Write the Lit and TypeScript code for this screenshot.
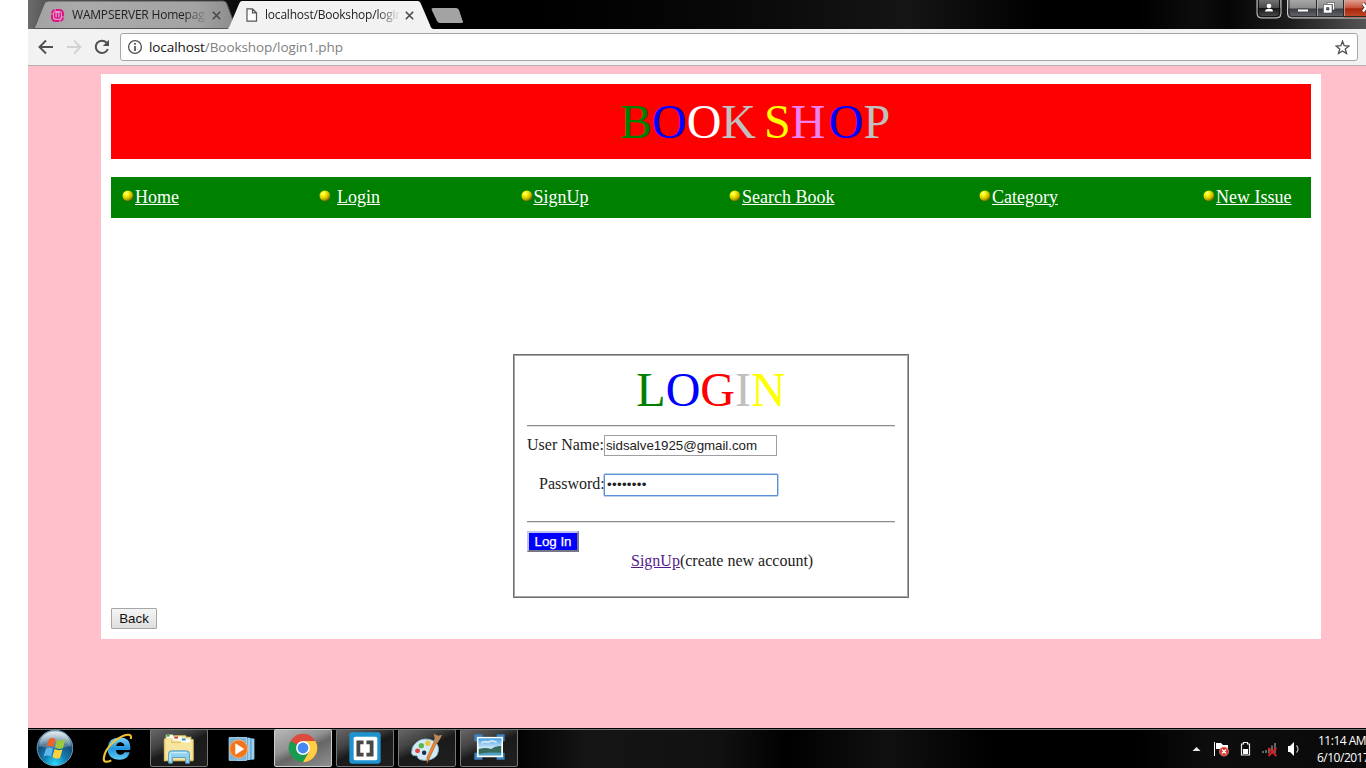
import { LitElement, html, css, svg } from "lit";
import { customElement } from "lit/decorators.js";

const closeIcon = html`<svg class="close" width="9" height="9" viewBox="0 0 9 9"><path d="M.8 .8l7.400 7.400M8.200 .8l-7.400 7.400" stroke="#4a4a4a" stroke-width="1.600" /></svg>`;

@customElement("browser-tabs")
class BrowserTabs extends LitElement {
  static styles = css`
    :host { display: block; height: 29px; font-family: "Open Sans", "Noto Sans", sans-serif; font-size: 12px; color: #222; overflow: hidden;
      background: linear-gradient(90deg, #6c6c6c 0, #555 20px, #000 240px, #000 520px, #080808 700px, #151515 880px, #000 1010px, #000 1110px, #0d0d0d 1170px, #050505 1200px, #1c1c1c 1260px, #555 1338px); }
    .strip { display: flex; height: 29px; padding-left: 7px; }
    .tab { position: relative; width: 205px; height: 29px; box-sizing: border-box; display: flex; align-items: center; padding: 1px 13px 0 15px; }
    .tab.front { margin-left: -12px; padding-left: 18px; padding-right: 17px; }
    .shape { position: absolute; left: 0; top: 0; }
    .tab:not(.front) .shape { left: -2px; }
    .fav, .label, .close { position: relative; flex: none; }
    .fav { margin-right: 7px; }
    .label { width: 134px; overflow: hidden; white-space: nowrap; letter-spacing: -0.2px; line-height: 18px;
      -webkit-mask-image: linear-gradient(90deg, #000 112px, transparent 136px); mask-image: linear-gradient(90deg, #000 112px, transparent 136px); }
    .close { margin-left: 6px; }
    .front .label { width: 134px; }
    .plus { margin: 8px 0 0 -2px; }
    .controls { display: flex; margin-left: auto; }
  `;
  render() {
    return html`<div class="strip">
      <div class="tab">
        <svg class="shape" width="207" height="29"><defs><linearGradient id="g"><stop offset="0" stop-color="#a2a2a2"/><stop offset=".2" stop-color="#ababab"/><stop offset=".8" stop-color="#a3a3a3"/><stop offset="1" stop-color="#8b8b8b"/></linearGradient></defs><path d="M.5 28.500Q2 27 3 24L11 4Q12 1 15 1H190Q193 1 194 4L203 28.500Z" fill="url(#g)" stroke="#555"/></svg>
        <svg class="fav" width="15" height="15" viewBox="0 0 15 15"><rect x="2" y="2" width="11" height="11" rx="3.500" fill="#e39cc5" stroke="#dc1686" stroke-width="2"/><path d="M4.700 4.500v4q0 1.600 1.400 1.600T7.500 8.500V5v3.500q0 1.600 1.400 1.600t1.400-1.600v-4" fill="none" stroke="#d91383" stroke-width="1.400"/><path d="M5 .8v2M10 12.300v2M1 6h2M12 9h2" stroke="#d8a7c2"/></svg>
        <span class="label">WAMPSERVER Homepag</span>${closeIcon}
      </div>
      <div class="tab front">
        <svg class="shape" width="206" height="29"><path d="M0 29Q2 26 3 23L11 4Q12 1 14 1H190Q192 1 193 4L202 25Q203 29 206 29Z" fill="#f2f2f2"/></svg>
        <svg class="fav" width="12" height="14" viewBox="0 0 12 14"><path d="M1 .8h5.500l4 4v8.400H1zM6.500 .8v4h4" fill="#fff" stroke="#555" stroke-width="1.200"/></svg>
        <span class="label">localhost/Bookshop/login</span>${closeIcon}
      </div>
      <svg class="plus" width="34" height="16"><path d="M2 0H25Q27 0 28 2L32 14Q32 15 31 15H9Q7 15 6 13L.7 2Q0 0 2 0Z" fill="#a3a3a3"/></svg>
      <svg class="controls" width="112" height="22" viewBox="1254 0 112 22">
        <defs><linearGradient id="b" x2="0" y2="1"><stop offset="0" stop-color="#777"/><stop offset=".45" stop-color="#4b4b4b"/><stop offset=".5" stop-color="#171717"/><stop offset="1" stop-color="#555"/></linearGradient>
        <linearGradient id="w" x2="0" y2="1"><stop offset="0" stop-color="#aaa"/><stop offset=".48" stop-color="#8b8b8b"/><stop offset=".52" stop-color="#3b3d42"/><stop offset="1" stop-color="#6a6d72"/></linearGradient>
        <linearGradient id="r" x2="0" y2="1"><stop offset="0" stop-color="#e1a193"/><stop offset=".45" stop-color="#c8513b"/><stop offset=".5" stop-color="#a72509"/><stop offset="1" stop-color="#c54c2d"/></linearGradient></defs>
        <path d="M1257-1V14Q1257 18 1261 18H1277Q1281 18 1281 14V-1" fill="url(#b)" stroke="#c8c8c8"/>
        <path d="M1258.500-1V13Q1258.500 16.500 1262 16.500H1276Q1279.500 16.500 1279.500 13V-1" fill="none" stroke="#111"/>
        <path d="M1287.500-1V14Q1287.500 18 1291.500 18H1368V-1" fill="url(#w)" stroke="#ccc"/>
        <path d="M1344 0H1366V17.500H1344Z" fill="url(#r)"/>
        <path d="M1289-1V13Q1289 16.500 1292 16.500H1366M1316.500 0V17M1343.500 0V17" fill="none" stroke="#292929"/>
        <path d="M1317.500 0V16M1344.500 0V16" stroke="#bbb" stroke-width=".7"/>
        <circle cx="1269" cy="6" r="2.300" fill="#fff"/><path d="M1265 11.500Q1265 8.700 1269 8.700T1273 11.500Z" fill="#fff"/>
        <path d="M1297.500 9h11v3h-11z" fill="#fff" stroke="#45474b"/>
        <path d="M1327 2.500h7.500v7.500h-2V4.500h-5.500z" fill="#fff" stroke="#444" stroke-width=".6"/><path d="M1323.500 4.500h8.500v8.500h-8.500zM1326.500 7.500v2.500h2.500v-2.500z" fill="#fff" fill-rule="evenodd" stroke="#444" stroke-width=".6"/>
        <path d="M1363 3.500l6 8M1369 3.500l-6 8" stroke="#333" stroke-width="4"/><path d="M1363 3.500l6 8M1369 3.500l-6 8" stroke="#fff" stroke-width="2.500"/>
      </svg>
    </div>`;
  }
}

@customElement("browser-toolbar")
class BrowserToolbar extends LitElement {
  static styles = css`
    :host { display: flex; height: 37px; box-sizing: border-box; border-bottom: 1px solid #b4b0b1; background: #f2f2f2; align-items: flex-start; padding: 4px 8px 0 10px; }
    .btn { margin: 6px 12px 0 0; flex: none; }
    .btn.reload { margin-right: 10px; }
    .omni { flex: 1; height: 28px; box-sizing: border-box; border: 1px solid #a6a6a6; border-radius: 3px; background: #fff; display: flex; align-items: center; padding: 0 7px 0 6px;
      font: 13.5px/20px "Open Sans", "Noto Sans", sans-serif; color: #111; }
    .url { margin-left: 6px; white-space: nowrap; letter-spacing: -0.08px; }
    .path { color: #808080; }
    .star { margin-left: auto; }
  `;
  render() {
    return html`
      <svg class="btn" width="16" height="16" viewBox="0 0 16 16"><path d="M15 8H2M8 1.500L1.500 8 8 14.500" fill="none" stroke="#505050" stroke-width="1.900"/></svg>
      <svg class="btn" width="16" height="16" viewBox="0 0 16 16"><path d="M1 8H14M8 1.500L14.500 8 8 14.500" fill="none" stroke="#d2d2d2" stroke-width="1.900"/></svg>
      <svg class="btn reload" width="16" height="16" viewBox="0 0 16 16"><path d="M13.800 10A6.200 6.200 0 1 1 12.600 3.700" fill="none" stroke="#505050" stroke-width="2"/><path d="M15 .8V7H8.800Z" fill="#505050"/></svg>
      <div class="omni">
        <svg width="16" height="16" viewBox="0 0 16 16"><circle cx="8" cy="8" r="6.400" fill="none" stroke="#505050" stroke-width="1.300"/><path d="M8 4v1.800M8 7v5" stroke="#505050" stroke-width="1.700"/></svg>
        <span class="url">localhost<span class="path">/Bookshop/login1.php</span></span>
        <svg class="star" width="15" height="15" viewBox="0 0 15 15"><path d="M7.500 1.300L9.200 5.700 14 6 10.300 9 11.500 13.500 7.500 11 3.500 13.500 4.700 9 1 6 5.800 5.700Z" fill="none" stroke="#505050" stroke-width="1.300"/></svg>
      </div>`;
  }
}

const letters = (items: [string, string][]) => items.map(([ch, c]) => html`<span class=${c}>${ch}</span>`);

@customElement("book-page")
class BookPage extends LitElement {
  static styles = css`
    :host { display: block; height: 662px; box-sizing: border-box; background: #ffc0cb; padding: 8px 45px 0 73px; font: 16px/18px "Liberation Serif", serif; color: #222; }
    .sheet { background: #fff; height: 565px; box-sizing: border-box; padding: 10px; display: flex; flex-direction: column; align-items: stretch; }
    .banner { height: 75px; background: #f00; font-size: 48px; line-height: 76px; padding-left: 509px; white-space: pre; box-sizing: border-box; }
    .green { color: #008000; } .blue { color: #00f; } .white { color: #fff; } .silver { color: #c0c0c0; }
    .yellow { color: #ff0; } .violet { color: #ee82ee; } .red { color: #f00; }
    .space { letter-spacing: -4px; }
    .banner .violet { letter-spacing: 3.300px; }
    .nav { height: 41px; margin-top: 18px; background: #008000; display: grid; grid-template-columns: 197px 201.5px 208.5px 250px 224px auto; align-items: center; padding: 0 19px 2px 11px; box-sizing: border-box; font-size: 18px; line-height: 20px; }
    .item { display: flex; align-items: center; }
    .item a { color: #fff; text-decoration: underline; white-space: nowrap; }
    .dot { width: 12px; height: 12px; margin: 0 1px 1px 0; }
    .dot.wide { margin-right: 6px; }
    .card { width: 396px; height: 244px; box-sizing: border-box; border: 1px solid #6e6e6e; box-shadow: inset 0 0 0 1px #a6a6a6; margin: 136px auto 0; padding: 0 13px; display: flex; flex-direction: column; }
    .title { font-size: 48px; line-height: 56px; height: 70px; padding-top: 7px; box-sizing: border-box; text-align: center; }
    .rule { height: 2px; box-sizing: border-box; border-top: 1px solid #8c8c8c; border-bottom: 1px solid #e2e2e2; flex: none; }
    .row { display: flex; align-items: center; height: 21px; margin-top: 8px; }
    .row.pass { margin-top: 17px; padding-left: 12px; height: 23px; }
    .row label { width: 77px; white-space: nowrap; flex: none; padding-bottom: 2px; }
    .row.pass label { width: 65px; }
    .field { width: 173px; height: 21px; box-sizing: border-box; border: 1px solid #a0a0a0; background: #fff; font: 13.333px/18px "Liberation Sans", sans-serif; padding: 0 2px 1px 1px; margin: 0; color: #222; outline: none; letter-spacing: -.05px; }
    .focus { width: 174px; height: 22px; border: 1px solid #5b8fd9; border-radius: 1px; box-shadow: 0 0 0 .5px #79a1dc; letter-spacing: .3px; padding-left: 2px; }
    .rule.two { margin-top: 25px; }
    .login { margin: 8px 0 0; width: 52px; height: 21px; box-sizing: border-box; border: 2px solid; border-color: #c4c4ea #777786 #777786 #c4c4ea; background: #00f; color: #fff; font: 13.333px/16px "Liberation Sans", sans-serif; padding: 0; white-space: nowrap; -webkit-text-stroke: .25px #fff; }
    .create { padding-left: 104px; line-height: 18px; white-space: nowrap; }
    .create a { color: #551a8b; text-decoration: underline; }
    .back { width: 46px; height: 21px; margin-top: 10px; padding: 0; box-sizing: border-box; border: 1px solid #a6a6a6; border-radius: 1px; background: linear-gradient(#f6f6f6, #dedede); font: 13.333px/18px "Liberation Sans", sans-serif; color: #111; }
  `;
  item(label: string, wide = false) {
    return html`<div class="item"><svg class="dot ${wide ? "wide" : ""}" viewBox="0 0 12 12"><defs><radialGradient id="d" cx=".35" cy=".3" r=".75"><stop offset="0" stop-color="#ffff9a"/><stop offset=".3" stop-color="#f7f300"/><stop offset=".65" stop-color="#cdbd00"/><stop offset="1" stop-color="#6e5800"/></radialGradient></defs><circle cx="5.900" cy="5.800" r="5.400" fill="url(#d)"/></svg><a>${label}</a></div>`;
  }
  render() {
    return html`<div class="sheet">
      <div class="banner">${letters([["B", "green"], ["O", "blue"], ["O", "white"], ["K", "silver"], [" ", "space"], ["S", "yellow"], ["H", "violet"], ["O", "blue"], ["P", "silver"]])}</div>
      <div class="nav">${this.item("Home")}${this.item("Login", true)}${this.item("SignUp")}${this.item("Search Book")}${this.item("Category")}${this.item("New Issue")}</div>
      <div class="card">
        <div class="title">${letters([["L", "green"], ["O", "blue"], ["G", "red"], ["I", "silver"], ["N", "yellow"]])}</div>
        <div class="rule"></div>
        <div class="row"><label>User Name:</label><input class="field" value="sidsalve1925@gmail.com" /></div>
        <div class="row pass"><label>Password:</label><input class="field focus" type="password" value="password" /></div>
        <div class="rule two"></div>
        <button class="login">Log In</button>
        <div class="create"><a>SignUp</a>(create new account)</div>
      </div>
      <button class="back">Back</button>
    </div>`;
  }
}

const startIcon = svg`<defs><radialGradient id="o" cx=".5" cy=".95" r=".9"><stop offset="0" stop-color="#2bdcff"/><stop offset=".35" stop-color="#127fb4"/><stop offset=".7" stop-color="#174e78"/><stop offset="1" stop-color="#8eabc0"/></radialGradient><linearGradient id="sh" x2="0" y2="1"><stop offset="0" stop-color="#fff" stop-opacity=".75"/><stop offset="1" stop-color="#fff" stop-opacity=".15"/></linearGradient></defs>
  <circle cx="20" cy="19" r="17.800" fill="url(#o)" stroke="#6f9db8"/><path d="M4 17Q6 3 20 2.500T36 17Q20 22 4 17Z" fill="url(#sh)"/>
  <path d="M14 10Q17 8 20.500 10L18.500 18Q15 16 11.500 18Z" fill="#f0642b"/><path d="M22 10.500Q26 12.500 30.500 10.500L28 19Q24 21 20 18.500Z" fill="#9bcb3c"/><path d="M11 19.500Q15 17.500 18 19.500L16 27.500Q12.500 25.500 8.500 27.500Z" fill="#5db6ee"/><path d="M19.500 20Q23.500 22 27.500 20.500L25 29Q21 30.500 17.500 28Z" fill="#ffd13c"/>`;
const ieIcon = svg`<defs><linearGradient id="ie" x2="0" y2="1"><stop offset="0" stop-color="#7ed2fa"/><stop offset=".5" stop-color="#2093de"/><stop offset="1" stop-color="#64cdf4"/></linearGradient></defs>
  <path fill-rule="evenodd" d="M8 19Q9 8 21 8T32 21H17Q17 26 22 26Q25 26 26 23.500H31.500Q29 31.500 21 31.500Q8 31 8 19ZM17 17H26Q25 13 21.500 13T17 17Z" fill="url(#ie)"/>
  <path d="M12 32Q4 36 4 30Q5 21 14 13Q22 6 29 5Q34 4.500 32.500 9.500" fill="none" stroke="#f2c330" stroke-width="2.200"/>`;
const explorerIcon = svg`<path d="M4 9V5h7l2 2h18v5l2 2v19H2V10Z" fill="#e9cf73"/><path d="M3 9h8l2-3h12l2 4h6v22H3Z" fill="#f8e6a0" stroke="#d7ba5c"/><path d="M5 5h7v4H5zM12 7h9v4h-9zM20 9h10v4H20z" fill="#fff"/><path d="M5 5h3v2H5z" fill="#26a338"/><path d="M13 7h4v2h-4z" fill="#d23b24"/><path d="M21 9h4v2h-4z" fill="#268dd2"/><path d="M20 13H10V11" fill="none" stroke="#d7ba5c"/><path d="M7 35V25Q7 22 10 22H26Q29 22 29 25V35H25V29H11V35Z" fill="#91d2ee" stroke="#549dc5"/><path d="M8.500 33V26Q8.500 24 11 24H26" fill="none" stroke="#dcf5ff"/>`;
const mediaIcon = svg`<path d="M14 7L32 9V31L14 33Z" fill="#3d8fc5"/><path d="M25 8l3 .5v23l-3 .5zM29 9l3 .5V31l-3 .500z" fill="#9fcfec"/><path d="M5.500 8H24V32H5.500Z" fill="#79b4d9" stroke="#b4d9ef"/><circle cx="15.500" cy="20" r="9.500" fill="#f0761d" stroke="#fbb06e"/><path d="M12 14L21.500 20l-9.500 6Z" fill="#fff"/>`;
const chromeIcon = svg`<circle cx="18" cy="19" r="15" fill="#dd4b3e"/><path d="M18 19L5 11.500A15 15 0 0 0 18 34L24.500 22.700Z" fill="#179c52"/><path d="M18 11.500H31A15 15 0 0 1 18 34L24.500 22.700Z" fill="#ffce43"/><circle cx="18" cy="19" r="7.300" fill="#fff"/><circle cx="18" cy="19" r="5.700" fill="#4587f3"/>`;
const bracketsIcon = svg`<rect x="1.500" y="2.500" width="33" height="33" rx="3" fill="#1d93cf"/><rect x="6" y="7" width="25" height="25" rx="2" fill="#fff"/><path d="M9 11h7.500v4h-3.500v9h3.500v4h-7.500zM19.500 11h7.500v17h-7.500v-4h3.500v-9h-3.500z" fill="#474747"/>`;
const paintIcon = svg`<path d="M5 15Q11 8 21 10Q31 13 30 22Q29 31 17 32Q8 32 8 28Q8 27 5 27Q1 27 2 22Q2 18 5 15Z" fill="#d3e9f5" stroke="#8ebcd7"/><circle cx="8" cy="22" r="2.600" fill="#e34242"/><circle cx="12" cy="16.500" r="2.800" fill="#58b64a"/><circle cx="19" cy="14" r="2.800" fill="#efc33b"/><circle cx="15" cy="24" r="2.300" fill="#182d48"/><path d="M28 14L18 35L18 29L25 13Z" fill="#eb8a2f" stroke="#a8541c" stroke-width=".6"/><path d="M25 13L26 8L25 4L30 6L34 5L32 9L29 14Z" fill="#b98957"/>`;
const photoIcon = svg`<defs><linearGradient id="p" x2="0" y2="1"><stop offset="0" stop-color="#3d98e0"/><stop offset=".6" stop-color="#d9effa"/></linearGradient></defs><path d="M4 12V6h7M26 6h7v6M33 24v6h-7M11 30H4v-6" fill="none" stroke="#3d82c0" stroke-width="3"/><rect x="6" y="8" width="26" height="20" fill="url(#p)"/><path d="M7 23H31V27H7Z" fill="#4f9fc0"/><path d="M7 20Q15 18 20 20Q26 16 31 17V24Q18 23 7 25Z" fill="#37695d"/><path d="M10 14q3-3 7-1q4-3 9 0" fill="none" stroke="#fff" stroke-width="1.800" opacity=".7"/><rect x="6" y="8" width="26" height="20" fill="none" stroke="#fff" stroke-width="1.500"/>`;

@customElement("task-bar")
class TaskBar extends LitElement {
  static styles = css`
    :host { display: flex; height: 40px; box-sizing: border-box; border-top: 1px solid #000; background: linear-gradient(#707070 0 1px, transparent 1px), linear-gradient(90deg, #000 0, #000 480px, #151515 560px, #111 690px, #000 760px, #101010 860px, #000 960px, #000 1110px, #0d0d0d 1180px, #0a0a0a 1338px); padding-left: 7px; color: #fff; font: 12px/17px "Open Sans", "Noto Sans", sans-serif; overflow: hidden; }
    .start { width: 38px; height: 38px; flex: none; }
    .task { width: 58px; height: 38px; box-sizing: border-box; margin: 0 4px 0 0; display: flex; justify-content: center; flex: none; border: 1px solid transparent; border-radius: 2px; }
    .task.first { margin: 0 4px 0 15px; }
    .open { border-color: #777; background: linear-gradient(155deg, #666 0, #444 30%, #1a1a1a 50%, #202020 100%); }
    .active { border-color: #ccc; background: linear-gradient(155deg, #b8b8b8 0, #929292 40%, #666 55%, #909090 100%); }
    .tray { display: flex; margin-left: auto; width: 174px; flex: none; }
    .icons { flex: none; }
    .clock { padding: 3px 0 0 16px; text-align: left; white-space: nowrap; letter-spacing: -0.5px; width: 60px; }
    .time { padding-left: 1px; }
  `;
  task(icon: unknown, cls = "") {
    return html`<div class="task ${cls}"><svg width="36" height="36" viewBox="0 0 36 38">${icon}</svg></div>`;
  }
  render() {
    return html`<svg class="start" viewBox="0 0 38 38">${startIcon}</svg>
      ${this.task(ieIcon, "first")}${this.task(explorerIcon, "open")}${this.task(mediaIcon)}${this.task(chromeIcon, "open active")}${this.task(bracketsIcon, "open")}${this.task(paintIcon, "open")}${this.task(photoIcon, "open")}
      <div class="tray">
        <svg class="icons" width="109" height="39" viewBox="1192 729 109 39">
          <path d="M1192.500 751l4-4 4 4z" fill="#e8e8f0"/>
          <path d="M1214.500 742v14" stroke="#fff"/><path d="M1216 743h5l2 2h5v6h-5l-2-2h-5z" fill="#fff"/><circle cx="1224" cy="751.500" r="4.500" fill="#d83028" stroke="#f2a098" stroke-width=".7"/><path d="M1222 749.500l4 4m0-4l-4 4" stroke="#fff" stroke-width="1.500"/>
          <path d="M1243.500 742.500h4v1.500h2v11h-8v-11h2z" fill="none" stroke="#eee" stroke-width="1.200"/><path d="M1243 749h5v5h-5z" fill="#fff"/>
          <path d="M1263 751v2M1266 750v3M1269 748v5.500M1272 745.500v8M1275 743v10" stroke="#666" stroke-width="2"/><path d="M1268.500 748l8 8m0-8l-8 8" stroke="#cf201d" stroke-width="2"/>
          <path d="M1288 746h2l4-4v14l-4-4h-2z" fill="#fff"/><path d="M1296.500 745.500q3 3.500 0 7" fill="none" stroke="#bbb" stroke-width="1.200"/>
        </svg>
        <div class="clock"><div class="time">11:14 AM</div><div>6/10/2017</div></div>
      </div>`;
  }
}

@customElement("app-root")
class AppRoot extends LitElement {
  static styles = css`
    :host { display: block; width: 1366px; height: 768px; box-sizing: border-box; padding-left: 28px; background: #fff; overflow: hidden; }
  `;
  render() {
    return html`<browser-tabs></browser-tabs><browser-toolbar></browser-toolbar><book-page></book-page><task-bar></task-bar>`;
  }
}
